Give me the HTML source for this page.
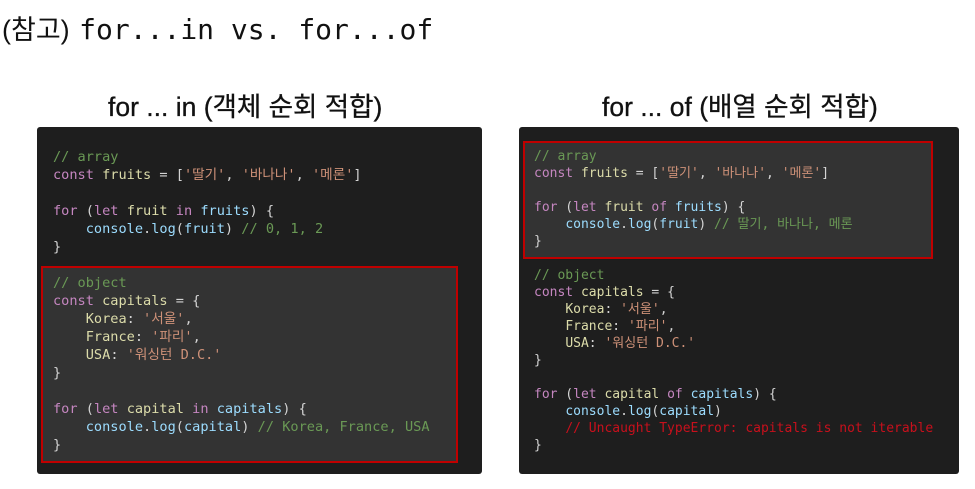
<!DOCTYPE html>
<html><head><meta charset="utf-8"><style>
body{margin:0;width:975px;height:489px;background:#fff;position:relative;overflow:hidden;font-family:"Liberation Sans","Noto Sans CJK KR",sans-serif}
.t{position:absolute;left:2px;top:8px;font-size:27px;color:#111;white-space:nowrap}
.t code{font-family:"DejaVu Sans Mono","Noto Sans CJK KR",monospace;font-size:28px;margin-left:2px}
.h{position:absolute;top:85px;font-size:26.5px;color:#111;white-space:nowrap;-webkit-text-stroke:0.3px #111}
.p{position:absolute;top:127px;height:347px;background:#1e1e1e;border-radius:3px}
.box{position:absolute;background:#333;border:2px solid #c00000}
.c{position:absolute;font-family:"DejaVu Sans Mono","Noto Sans CJK KR",monospace;font-size:13.6px;color:#d4d4d4;white-space:pre;line-height:18px}
.cm{color:#6a9955}.k{color:#c586c0}.v{color:#dcdcaa}.b{color:#9cdcfe}.s{color:#ce9178}.e{color:#c8101c}.w{color:#dcdcaa}
</style></head><body>
<div class="t">(참고) <code>for...in vs. for...of</code></div>
<div class="h" style="left:108px">for ... in (객체 순회 적합)</div>
<div class="h" style="left:602px">for ... of (배열 순회 적합)</div>
<div class="p" style="left:37px;width:445px"></div>
<div class="p" style="left:519px;width:440px"></div>
<div class="box" style="left:41px;top:266px;width:413px;height:193px"></div>
<div class="box" style="left:523px;top:141px;width:406px;height:114px"></div>
<div class="c" style="left:53px;top:148px"><span class="cm">// array</span>
<span class="k">const</span> <span class="w">fruits</span> = [<span class="s">'딸기'</span>, <span class="s">'바나나'</span>, <span class="s">'메론'</span>]

<span class="k">for</span> (<span class="k">let</span> <span class="w">fruit</span> <span class="k">in</span> <span class="b">fruits</span>) {
    <span class="b">console</span>.<span class="b">log</span>(<span class="b">fruit</span>) <span class="cm">// 0, 1, 2</span>
}

<span class="cm">// object</span>
<span class="k">const</span> <span class="w">capitals</span> = {
    <span class="w">Korea</span>: <span class="s">'서울'</span>,
    <span class="w">France</span>: <span class="s">'파리'</span>,
    <span class="w">USA</span>: <span class="s">'워싱턴 D.C.'</span>
}

<span class="k">for</span> (<span class="k">let</span> <span class="w">capital</span> <span class="k">in</span> <span class="b">capitals</span>) {
    <span class="b">console</span>.<span class="b">log</span>(<span class="b">capital</span>) <span class="cm">// Korea, France, USA</span>
}</div>
<div class="c" style="left:534px;top:148px;line-height:17px;font-size:13px"><span class="cm">// array</span>
<span class="k">const</span> <span class="w">fruits</span> = [<span class="s">'딸기'</span>, <span class="s">'바나나'</span>, <span class="s">'메론'</span>]

<span class="k">for</span> (<span class="k">let</span> <span class="w">fruit</span> <span class="k">of</span> <span class="b">fruits</span>) {
    <span class="b">console</span>.<span class="b">log</span>(<span class="b">fruit</span>) <span class="cm">// 딸기, 바나나, 메론</span>
}

<span class="cm">// object</span>
<span class="k">const</span> <span class="w">capitals</span> = {
    <span class="w">Korea</span>: <span class="s">'서울'</span>,
    <span class="w">France</span>: <span class="s">'파리'</span>,
    <span class="w">USA</span>: <span class="s">'워싱턴 D.C.'</span>
}

<span class="k">for</span> (<span class="k">let</span> <span class="w">capital</span> <span class="k">of</span> <span class="b">capitals</span>) {
    <span class="b">console</span>.<span class="b">log</span>(<span class="b">capital</span>)
    <span class="e">// Uncaught TypeError: capitals is not iterable</span>
}</div>
</body></html>
